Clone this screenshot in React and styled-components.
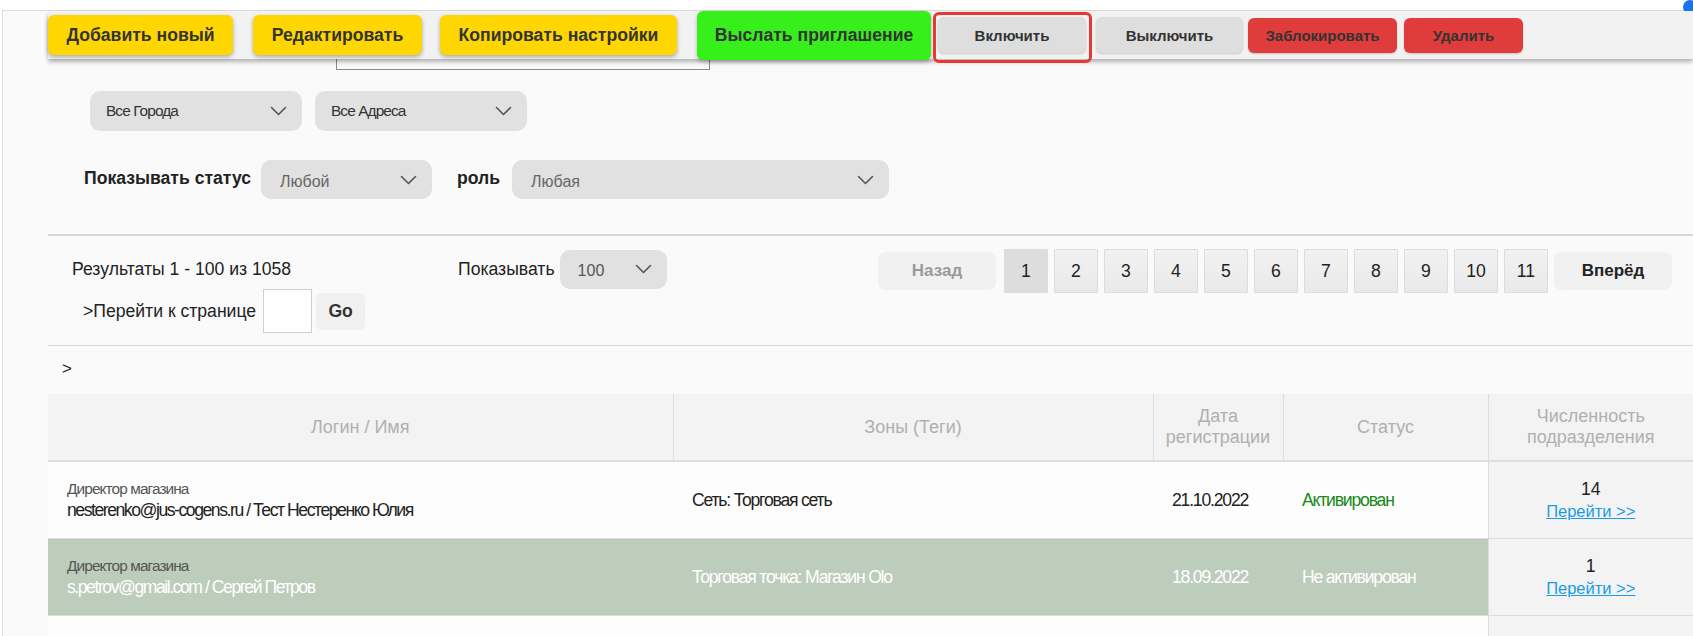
import React from 'react';
import styled, { createGlobalStyle } from 'styled-components';

const Global = createGlobalStyle`
  html, body { margin: 0; padding: 0; background: #fff; overflow: hidden; }
  body { font-family: "Liberation Sans", Arial, sans-serif; color: #222; }
  * { box-sizing: border-box; }
`;

const Frame = styled.div`
  position: relative;
  margin: 10px 0 0 2px;
  border-top: 1px solid #dcdcdc;
  border-left: 1px solid #dcdcdc;
  background: #fafafa;
  min-height: 700px;
`;

const Dot = styled.span`
  position: absolute;
  top: -11px;
  right: -4px;
  width: 14px;
  height: 14px;
  border-radius: 50%;
  background: #1a73e8;
`;

const Content = styled.div`
  margin-left: 45px;
`;

const Toolbar = styled.div`
  position: relative;
  z-index: 1;
  display: flex;
  align-items: center;
  height: 48px;
  background: #f2f2f2;
  box-shadow: 0 3px 4px rgba(0, 0, 0, 0.28);
`;

const tones = {
  yellow: { bg: '#ffd600', h: 40, fs: 17.6, shadow: '0 2px 4px rgba(0,0,0,0.3)' },
  green: { bg: '#36ef1b', h: 49, fs: 17.6, shadow: '0 2px 4px rgba(0,0,0,0.25)' },
  gray: { bg: '#dedede', h: 36, fs: 15, shadow: '0 1px 2px rgba(0,0,0,0.18)' },
  red: { bg: '#e13c3c', h: 35, fs: 15, shadow: '0 1px 2px rgba(0,0,0,0.2)' },
};

const ActionButton = styled.button`
  flex: none;
  width: ${(p) => p.$w}px;
  height: ${(p) => tones[p.$tone].h}px;
  margin-left: ${(p) => p.$ml || 0}px;
  padding: 0;
  border: 0;
  border-radius: 6px;
  background: ${(p) => tones[p.$tone].bg};
  box-shadow: ${(p) => tones[p.$tone].shadow};
  color: #333;
  font-family: "Liberation Sans", Arial, sans-serif;
  font-weight: bold;
  font-size: ${(p) => tones[p.$tone].fs}px;
  cursor: pointer;
`;

const FocusRing = styled.div`
  flex: none;
  align-self: flex-start;
  margin: 1px 0 0 2px;
  padding: 2px 3px 7px 2px;
  border: 3px solid #e53935;
  border-radius: 6px;
  display: flex;
`;

const HiddenBox = styled.div`
  width: 374px;
  height: 11px;
  margin-left: 288px;
  border: 1px solid #8a8a8a;
  border-top: 0;
`;

const FilterRow = styled.div`
  display: flex;
  align-items: center;
  margin-top: ${(p) => p.$mt}px;
  padding-left: ${(p) => p.$pl}px;
`;

const Select = styled.div`
  flex: none;
  display: flex;
  align-items: center;
  justify-content: space-between;
  width: ${(p) => p.$w}px;
  height: ${(p) => p.$h || 40}px;
  margin-left: ${(p) => p.$ml || 0}px;
  padding: 0 15px 0 ${(p) => p.$pl || 16}px;
  background: #e1e1e1;
  border-radius: 10px;
  color: ${(p) => p.$color || '#333'};
  font-size: ${(p) => p.$fs || 15.4}px;
  letter-spacing: ${(p) => p.$ls || 0}px;
`;

const SelectText = styled.span`
  padding-top: ${(p) => p.$pt || 0}px;
`;

const Label = styled.span`
  flex: none;
  margin-left: ${(p) => p.$ml || 0}px;
  margin-top: ${(p) => p.$mt || 0}px;
  font-weight: ${(p) => (p.$bold ? 'bold' : 'normal')};
  font-size: 17.6px;
  color: #222;
`;

const Divider = styled.div`
  margin-top: ${(p) => p.$mt || 0}px;
  border-top: ${(p) => p.$w}px solid #d8d8d8;
`;

const Pager = styled.div`
  display: flex;
  align-items: flex-start;
  padding: 13px 0 12px 24px;
`;

const PagerLeft = styled.div`
  flex: none;
  width: 386px;
`;

const Line = styled.div`
  display: flex;
  align-items: center;
  height: ${(p) => p.$h}px;
  padding-left: ${(p) => p.$pl || 0}px;
  font-size: 17.6px;
  color: #222;
`;

const PageInput = styled.input`
  width: 49px;
  height: 44px;
  margin-left: 7px;
  border: 1px solid #cfcfcf;
  background: #fff;
`;

const GoButton = styled.button`
  width: 49px;
  height: 37px;
  margin-left: 4px;
  border: 0;
  border-radius: 6px;
  background: #f0f0f0;
  color: #333;
  font-family: "Liberation Sans", Arial, sans-serif;
  font-weight: bold;
  font-size: 17.6px;
`;

const PagerMiddle = styled.div`
  flex: none;
  width: 420px;
  display: flex;
  align-items: center;
  height: 40px;
`;

const Pages = styled.div`
  display: flex;
  align-items: center;
  height: 44px;
`;

const NavButton = styled.button`
  width: 118px;
  height: 38px;
  margin: 0 ${(p) => (p.$prev ? 8 : 0)}px 0 ${(p) => (p.$prev ? 0 : 6)}px;
  border: 0;
  border-radius: 8px;
  background: #f1f1f1;
  color: ${(p) => (p.$prev ? '#9a9a9a' : '#222')};
  font-family: "Liberation Sans", Arial, sans-serif;
  font-weight: bold;
  font-size: 17px;
`;

const PageButton = styled.button`
  width: 44px;
  height: 44px;
  margin-left: ${(p) => (p.$first ? 0 : 6)}px;
  border: 1px solid #dcdcdc;
  border-radius: 1px;
  background: ${(p) => (p.$active ? '#dddddd' : 'linear-gradient(#f2f2f2, #e9e9e9)')};
  color: #222;
  font-family: "Liberation Sans", Arial, sans-serif;
  font-size: 17.6px;
`;

const Caret = styled.div`
  margin-top: 13px;
  padding-left: 14px;
  height: 20px;
  line-height: 20px;
  font-size: 17px;
  color: #222;
`;

const Table = styled.table`
  margin-top: 15px;
  width: 100%;
  border-collapse: collapse;
  table-layout: fixed;
`;

const Th = styled.th`
  height: 67px;
  padding: 0 6px;
  background: #f3f3f3;
  color: #b0b0b0;
  font-weight: normal;
  font-size: 18px;
  line-height: 21px;
  text-align: center;
  border-right: 1px solid #dedede;
  border-bottom: 2px solid #dedede;
  &:last-child {
    border-right: 0;
  }
`;

const Tr = styled.tr`
  background: ${(p) => (p.$hl ? '#bdcdbb' : '#fdfdfd')};
`;

const Td = styled.td`
  height: 77px;
  padding: 0 19px;
  border-bottom: 1px solid #dcdcdc;
  vertical-align: middle;
  font-size: 17.6px;
  line-height: 22px;
  letter-spacing: -1.2px;
  color: ${(p) => (p.$light ? '#fff' : p.$status ? '#188a18' : '#222')};
  white-space: nowrap;
`;

const CountTd = styled.td`
  height: 77px;
  padding: 0;
  background: #f3f3f3;
  border-left: 1px solid #dcdcdc;
  border-bottom: 1px solid #dcdcdc;
  text-align: center;
  vertical-align: middle;
  font-size: 17.6px;
  line-height: 22px;
  color: #222;
`;

const Role = styled.div`
  font-size: 15.4px;
  line-height: 20px;
  letter-spacing: -0.9px;
  color: #555;
`;

const Login = styled.div`
  letter-spacing: -1.45px;
`;

const GoLink = styled.a`
  display: block;
  font-size: 16.5px;
  color: #1a9be8;
  text-decoration: underline;
`;

const Chevron = () => (
  <svg width="17" height="10" viewBox="0 0 17 10" fill="none">
    <path d="M1.5 1.5 L8.5 8.5 L15.5 1.5" stroke="#555" strokeWidth="1.6" strokeLinecap="round" strokeLinejoin="round" />
  </svg>
);

const users = [
  { role: 'Директор магазина', login: 'nesterenko@jus-cogens.ru / Тест Нестеренко Юлия', zone: 'Сеть: Торговая сеть', date: '21.10.2022', status: 'Активирован', active: true, count: 14 },
  { role: 'Директор магазина', login: 's.petrov@gmail.com / Сергей Петров', zone: 'Торговая точка: Магазин Olo', date: '18.09.2022', status: 'Не активирован', active: false, count: 1, hl: true },
];

export default function App() {
  return (
    <>
      <Global />
      <Frame>
        <Dot />
        <Content>
          <Toolbar>
            <ActionButton $tone="yellow" $w={185}>Добавить новый</ActionButton>
            <ActionButton $tone="yellow" $w={169} $ml={20}>Редактировать</ActionButton>
            <ActionButton $tone="yellow" $w={237} $ml={18}>Копировать настройки</ActionButton>
            <ActionButton $tone="green" $w={234} $ml={20}>Выслать приглашение</ActionButton>
            <FocusRing>
              <ActionButton $tone="gray" $w={148}>Включить</ActionButton>
            </FocusRing>
            <ActionButton $tone="gray" $w={147} $ml={4}>Выключить</ActionButton>
            <ActionButton $tone="red" $w={149} $ml={5}>Заблокировать</ActionButton>
            <ActionButton $tone="red" $w={119} $ml={7}>Удалить</ActionButton>
          </Toolbar>
          <HiddenBox />

          <FilterRow $mt={21} $pl={42}>
            <Select $w={212} $ls={-0.9}>
              <span>Все Города</span>
              <Chevron />
            </Select>
            <Select $w={212} $ml={13} $ls={-0.9}>
              <span>Все Адреса</span>
              <Chevron />
            </Select>
          </FilterRow>

          <FilterRow $mt={29} $pl={36}>
            <Label $bold $mt={-2}>Показывать статус</Label>
            <Select $w={171} $h={39} $ml={10} $pl={19} $fs={16} $color="#666">
              <SelectText $pt={4}>Любой</SelectText>
              <Chevron />
            </Select>
            <Label $bold $ml={25} $mt={-2}>роль</Label>
            <Select $w={377} $h={39} $ml={12} $pl={19} $fs={16} $color="#666">
              <SelectText $pt={4}>Любая</SelectText>
              <Chevron />
            </Select>
          </FilterRow>

          <Divider $w={2} $mt={35} />

          <Pager>
            <PagerLeft>
              <Line $h={40}>Результаты 1 - 100 из 1058</Line>
              <Line $h={44} $pl={11}>
                &gt;Перейти к странице
                <PageInput type="text" />
                <GoButton>Go</GoButton>
              </Line>
            </PagerLeft>
            <PagerMiddle>
              <Label>Показывать</Label>
              <Select $w={107} $h={39} $ml={5} $pl={18} $fs={16} $color="#555">
                <SelectText $pt={3}>100</SelectText>
                <Chevron />
              </Select>
            </PagerMiddle>
            <Pages>
              <NavButton $prev>Назад</NavButton>
              {Array.from({ length: 11 }, (_, i) => (
                <PageButton key={i} $first={i === 0} $active={i === 0}>
                  {i + 1}
                </PageButton>
              ))}
              <NavButton>Вперёд</NavButton>
            </Pages>
          </Pager>

          <Divider $w={1} />
          <Caret>&gt;</Caret>

          <Table>
            <colgroup>
              <col style={{ width: 625 }} />
              <col style={{ width: 480 }} />
              <col style={{ width: 130 }} />
              <col style={{ width: 205 }} />
              <col style={{ width: 205 }} />
            </colgroup>
            <thead>
              <tr>
                <Th>Логин / Имя</Th>
                <Th>Зоны (Теги)</Th>
                <Th>Дата<br />регистрации</Th>
                <Th>Статус</Th>
                <Th>Численность<br />подразделения</Th>
              </tr>
            </thead>
            <tbody>
              {users.map((u, i) => (
                <Tr key={i} $hl={u.hl}>
                  <Td $light={u.hl}>
                    <Role>{u.role}</Role>
                    <Login>{u.login}</Login>
                  </Td>
                  <Td $light={u.hl}>{u.zone}</Td>
                  <Td $light={u.hl}>{u.date}</Td>
                  <Td $light={u.hl} $status={u.active}>{u.status}</Td>
                  <CountTd>
                    {u.count}
                    <GoLink href="#">Перейти &gt;&gt;</GoLink>
                  </CountTd>
                </Tr>
              ))}
              <Tr>
                <Td />
                <Td />
                <Td />
                <Td />
                <CountTd />
              </Tr>
            </tbody>
          </Table>
        </Content>
      </Frame>
    </>
  );
}
